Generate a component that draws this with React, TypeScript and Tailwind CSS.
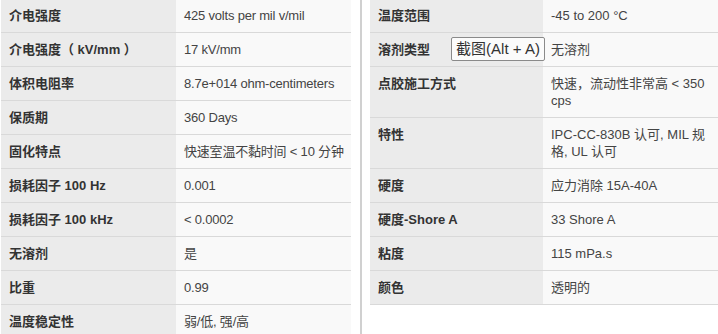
import React from "react";

type Row = { k: string; v: string; tip?: boolean };

const left: Row[] = [
  { k: "介电强度", v: "425 volts per mil v/mil" },
  { k: "介电强度（ kV/mm ）", v: "17 kV/mm" },
  { k: "体积电阻率", v: "8.7e+014 ohm-centimeters" },
  { k: "保质期", v: "360 Days" },
  { k: "固化特点", v: "快速室温不黏时间 < 10 分钟" },
  { k: "损耗因子 100 Hz", v: "0.001" },
  { k: "损耗因子 100 kHz", v: "< 0.0002" },
  { k: "无溶剂", v: "是" },
  { k: "比重", v: "0.99" },
  { k: "温度稳定性", v: "弱/低, 强/高" },
];

const right: Row[] = [
  { k: "温度范围", v: "-45 to 200 °C" },
  { k: "溶剂类型", v: "无溶剂", tip: true },
  { k: "点胶施工方式", v: "快速，流动性非常高 < 350 cps" },
  { k: "特性", v: "IPC-CC-830B 认可, MIL 规格, UL 认可" },
  { k: "硬度", v: "应力消除 15A-40A" },
  { k: "硬度-Shore A", v: "33 Shore A" },
  { k: "粘度", v: "115 mPa.s" },
  { k: "颜色", v: "透明的" },
];

function Table({ rows, labelW, nowrap }: { rows: Row[]; labelW: string; nowrap?: boolean }) {
  return (
    <div className="flex flex-col">
      {rows.map((r) => (
        <div key={r.k} className="relative flex border-b border-[#d9d9d9]">
          <div
            className={`${labelW} shrink-0 bg-[#ebebeb] px-2 py-2 font-bold text-[#333] leading-[17px] whitespace-nowrap`}
          >
            {r.k}
          </div>
          <div
            className={`flex-1 bg-[#f9f9f9] px-2 py-2 text-[#444] leading-[17px] ${nowrap ? "whitespace-nowrap tracking-[-0.2px]" : ""}`}
          >
            {r.v}
          </div>
          {r.tip && (
            <div className="absolute left-[81px] top-[4px] h-[24px] w-[94px] rounded-[2px] border border-[#8a8a8a] bg-[#fbfbfb] text-center text-[15px] leading-[22px] text-[#333] font-normal">
              截图(Alt + A)
            </div>
          )}
        </div>
      ))}
    </div>
  );
}

export default function App() {
  return (
    <div
      className="h-[334px] w-[718px] overflow-hidden bg-white text-[13px]"
      style={{ fontFamily: '"Liberation Sans", Arial, "Noto Sans CJK SC", sans-serif' }}
    >
      <div className="mt-[-1px] flex">
        <div className="ml-[1px] w-[350px] shrink-0 overflow-hidden">
          <Table rows={left} labelW="w-[175px]" nowrap />
        </div>
        <div className="ml-[9px] h-[340px] w-[2px] shrink-0 bg-[#d0d0d0]" />
        <div className="ml-[8px] w-[350px] shrink-0">
          <Table rows={right} labelW="w-[173px]" />
        </div>
      </div>
    </div>
  );
}
